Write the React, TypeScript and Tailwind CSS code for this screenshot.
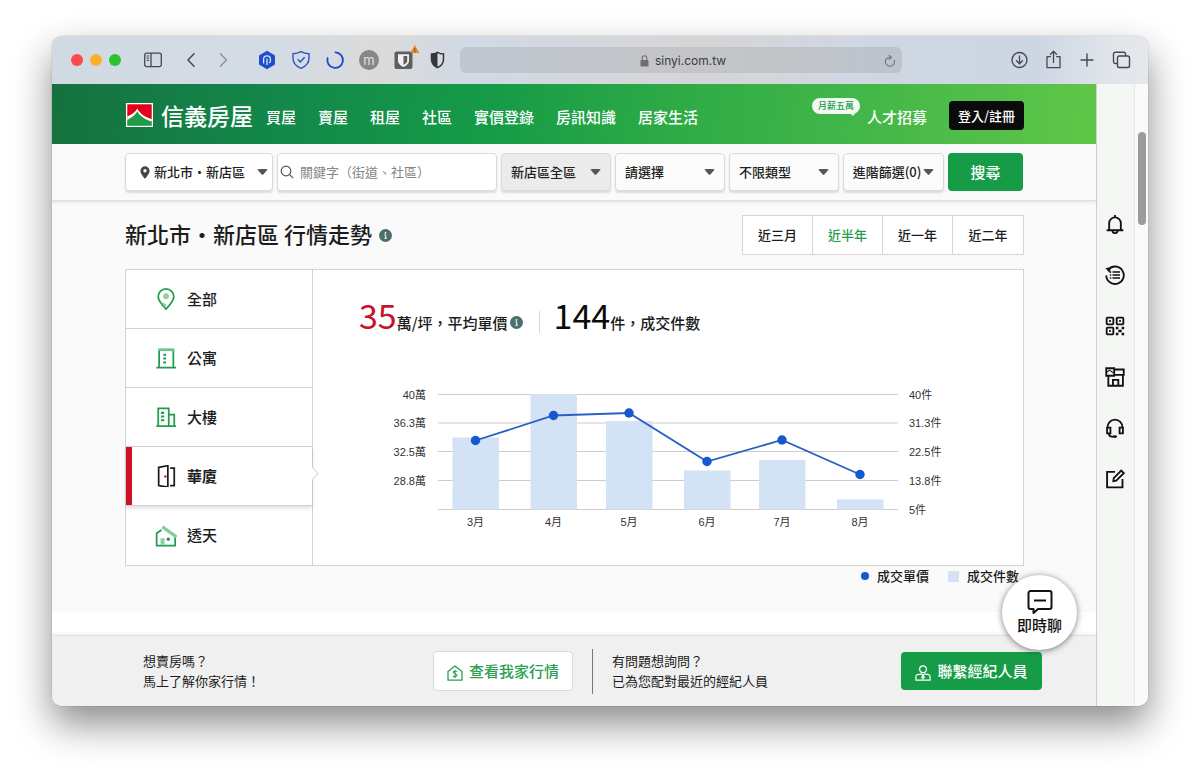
import type { ReactNode } from "react";

function Svg({
  size = 20,
  box = 24,
  width = 1.5,
  className = "",
  children,
}: {
  size?: number;
  box?: number;
  width?: number;
  className?: string;
  children: ReactNode;
}) {
  return (
    <svg
      width={size}
      height={size}
      viewBox={`0 0 ${box} ${box}`}
      fill="none"
      stroke="currentColor"
      strokeWidth={width}
      aria-hidden="true"
      className={`shrink-0 ${className}`}
    >
      {children}
    </svg>
  );
}

function Caret() {
  return (
    <svg width="11" height="6" viewBox="0 0 11 6" aria-hidden="true" className="pointer-events-none shrink-0 text-[#555555]">
      <path d="M0.3 0.4 C2 -0.1 9 -0.1 10.7 0.4 L6.3 5.4 Q5.5 6.2 4.7 5.4Z" fill="currentColor" />
    </svg>
  );
}

function InfoDot() {
  return (
    <svg width="13" height="13" viewBox="0 0 13 13" aria-hidden="true" className="shrink-0">
      <circle cx="6.5" cy="6.5" r="6.5" fill="#4a706c" />
      <circle cx="6.5" cy="3.9" r="0.9" fill="#ffffff" />
      <path d="M5.4 5.9h1.300v3.200M5.300 9.200h2.600" stroke="#ffffff" strokeWidth="1" fill="none" />
    </svg>
  );
}

function BrowserBar() {
  return (
    <div className="flex h-12 items-center bg-[linear-gradient(90deg,#d1d9e3_0%,#d3dbe5_18%,#dadbdb_30%,#d2d9e4_38%,#d5d5d6_60%,#d0d7e2_72%,#cdd6e3_90%,#e2e6eb_97%,#e4e7ec_100%)] pl-[19px] pr-[17px] text-[#45474c]">
      <div className="flex gap-[7px]">
        <span className="size-3 rounded-full bg-[#f94b4c]" />
        <span className="size-3 rounded-full bg-[#fdb12b]" />
        <span className="size-3 rounded-full bg-[#2bc131]" />
      </div>
      <button type="button" aria-label="側邊欄" className="ml-[23px]">
        <svg width="18" height="16" viewBox="0 0 18 16" fill="none" stroke="currentColor" strokeWidth="1.3" aria-hidden="true">
          <rect x="0.7" y="1.2" width="16.6" height="13.4" rx="1.8" />
          <path d="M7 1.2v13.4" />
          <path d="M2.5 4h2.7M2.5 6.2h2.7M2.5 8.4h2.7" strokeWidth="1" />
        </svg>
      </button>
      <button type="button" aria-label="上一頁" className="ml-[19px]">
        <Svg box={20}><path d="M13 3.8 7 10l6 6.2" strokeLinecap="round" strokeLinejoin="round" /></Svg>
      </button>
      <button type="button" aria-label="下一頁" className="ml-3 text-[#8f949c]">
        <Svg box={20}><path d="M7.5 3.8 13.5 10l-6 6.2" strokeLinecap="round" strokeLinejoin="round" /></Svg>
      </button>
      <div className="ml-6 flex gap-[14px]">
        <Svg box={20}>
          <path d="M10 1.6 17.2 5.8v8.4L10 18.400 2.800 14.200V5.800Z" fill="#1d4ecb" stroke="#1d4ecb" strokeLinejoin="round" />
          <path d="M6.600 13.400V9.200a3.400 3.400 0 0 1 6.800 0v1.900a1.600 1.600 0 0 1-1.600 1.600M10 8.500v6.500" stroke="#dbe6fb" strokeWidth="1.300" />
        </Svg>
        <Svg box={20}>
          <path d="M10 1.6c2.6 1.4 5.3 2 8 2.1v4.6c0 5-3.6 8.2-8 10.1-4.400-1.900-8-5.100-8-10.100V3.700c2.700-.1 5.400-.7 8-2.100Z" stroke="#2a55c9" strokeWidth="1.4" />
          <path d="m6.700 9.300 2.500 2.600 4.500-4.700" stroke="#2a55c9" strokeWidth="1.500" />
        </Svg>
        <Svg box={20}>
          <path d="M10.500 2.300A7.800 7.800 0 1 1 2.600 8" stroke="#1c45d6" strokeWidth="1.800" strokeLinecap="round" />
        </Svg>
        <span className="flex size-5 items-center justify-center rounded-full bg-[#878787] font-['Inter',sans-serif] text-[13px] leading-none text-[#e2e2e2]">m</span>
        <svg width="20" height="20" viewBox="0 0 20 20" aria-hidden="true" className="overflow-visible">
          <rect x="1.500" y="1.500" width="18" height="17.500" rx="2" fill="#5f5f60" />
          <path d="M5 4.200h11v6.300c0 3.200-2.800 5.200-5.500 6.600C7.800 15.700 5 13.700 5 10.500Z" fill="#f1f1f1" />
          <path d="M10.500 6h3.700v4.600c0 2-1.600 3.300-3.700 4.500Z" fill="#5f5f60" />
          <path d="M21.800-5 26.300 3H17.300Z" fill="#e9862b" />
          <path d="M21.800-2v2.800M21.800 1.400v1" stroke="#7c4a1a" strokeWidth="0.900" />
        </svg>
        <Svg box={20}>
          <path d="M10.500 2.300c2 1.300 4 1.700 6 1.700v5.200c0 4-2.600 6.800-6 8.500-3.400-1.700-6-4.500-6-8.500V4c2 0 4-.4 6-1.700Z" stroke="#33363c" strokeWidth="1.500" />
          <path d="M10.500 2.300v15.400c-3.400-1.700-6-4.500-6-8.500V4c2 0 4-.4 6-1.700Z" fill="#33363c" stroke="none" />
        </Svg>
      </div>
      <div className="ml-[13px] grid h-[26px] flex-1 grid-cols-[1fr_auto_1fr] items-center rounded-md bg-[linear-gradient(90deg,#bfc7d1,#c4c5c7_50%,#c2c4c8_75%,#bbc3ce)] pl-2.5 pr-1.5 pt-0.5">
        <span />
        <span className="flex items-center gap-1.5 font-['Inter',sans-serif] text-[12px] text-[#3b3c3f]">
          <svg width="9" height="12" viewBox="0 0 9 12" aria-hidden="true">
            <rect x="0.500" y="5" width="8" height="6.600" rx="1" fill="#6e6f72" />
            <path d="M2.200 5.200V3.100a2.300 2.300 0 0 1 4.600 0v2.100" fill="none" stroke="#6e6f72" strokeWidth="1.100" />
          </svg>
          sinyi.com.tw
        </span>
        <button type="button" aria-label="重新載入" className="justify-self-end text-[#6d7178]">
          <Svg size={12} box={12} width={1.1}>
            <path d="M10.200 5.400A4.500 4.500 0 1 1 6 2.300h1M5.200 0.400 7.300 2.300 5.200 4.400" strokeLinecap="round" />
          </Svg>
        </button>
      </div>
      <div className="ml-[107px] flex gap-[14px]">
        <button type="button" aria-label="下載項目">
          <Svg box={20} width={1.3}>
            <circle cx="10.500" cy="10" r="7.500" />
            <path d="M10.500 6v7.500M7.500 10.700l3 3 3-3" strokeLinecap="round" strokeLinejoin="round" />
          </Svg>
        </button>
        <button type="button" aria-label="分享">
          <Svg box={20} width={1.300}>
            <path d="M7.300 6.700H4v11h13v-11h-3.300M10.500 12.500V1.500M7.500 4.300l3-3 3 3" strokeLinecap="round" strokeLinejoin="round" />
          </Svg>
        </button>
        <button type="button" aria-label="新增分頁">
          <Svg box={20} width={1.400}><path d="M10 4v12M4 10h12" strokeLinecap="round" /></Svg>
        </button>
        <button type="button" aria-label="分頁總覽">
          <Svg box={20} width={1.400}>
            <rect x="6.500" y="6" width="12" height="11.500" rx="1.800" />
            <path d="M6.300 13.500H4.200a1.700 1.700 0 0 1-1.700-1.700V4a1.700 1.700 0 0 1 1.700-1.700h8.600A1.700 1.700 0 0 1 14.500 4v1.800" />
          </Svg>
        </button>
      </div>
    </div>
  );
}

const navItems = ["買屋", "賣屋", "租屋", "社區", "實價登錄", "房訊知識", "居家生活"];

function SiteHeader() {
  return (
    <header className="flex h-[60px] items-center bg-[linear-gradient(97deg,#15713f_0%,#13884a_22%,#159b47_42%,#2fab46_60%,#44b749_78%,#60c648_100%)] pl-[74px] pr-[72px] text-white">
      <a href="#home" className="flex items-center gap-2 pt-0.5">
        <svg width="27" height="24" viewBox="0 0 27 24" aria-hidden="true">
          <rect width="27" height="24" fill="#ffffff" />
          <rect x="1.300" y="1.300" width="24.400" height="21.400" fill="#e2001a" />
          <path d="M1.300 13.500C5.500 12 9.500 9 11.300 5.500C13.500 10 19 14.500 25.700 16V22.700H1.300Z" fill="#ffffff" />
          <path d="M1.300 17C6 14.500 9.500 11.500 11.300 8.500C14 13 19 16.500 25.700 18.500V22.700H1.300Z" fill="#1f9c48" />
        </svg>
        <span className="text-[23px] font-medium leading-none">信義房屋</span>
      </a>
      <nav className="ml-[13px] flex gap-[22px] pt-1 text-[15px] font-medium leading-none">
        {navItems.map((item) => (
          <a key={item} href="#nav" className="whitespace-nowrap">{item}</a>
        ))}
      </nav>
      <div className="ml-auto flex items-center">
        <a href="#jobs" className="relative pt-1 text-[15px] font-medium leading-none">
          人才招募
          <span className="absolute bottom-2.5 right-[67px] flex h-4 w-12 items-center justify-center rounded-full bg-[#f2faf3] text-[9px] font-medium leading-none text-[#1a9a49]">
            月薪五萬
            <svg width="9" height="6" viewBox="0 0 9 6" aria-hidden="true" className="absolute right-1 top-[13px]">
              <path d="M0 0.500 9 0 6.500 5Z" fill="#f2faf3" />
            </svg>
          </span>
        </a>
        <button type="button" className="ml-[22px] mt-[3px] h-[29px] w-[75px] rounded bg-[#0b0b0b] text-[13px] font-medium leading-none">
          登入/註冊
        </button>
      </div>
    </header>
  );
}

const boxClass =
  "h-[38px] rounded border border-[#d9dbdb] text-[13px] text-[#222222] shadow-[0_2px_2px_rgba(0,0,0,0.12)]";

function FilterSelect({ label, value, className }: { label: string; value: string; className: string }) {
  return (
    <label className="grid w-[110px] shrink-0 items-center">
      <select
        aria-label={label}
        defaultValue={value}
        className={`${boxClass} ${className} col-start-1 row-start-1 w-full appearance-none pl-[9px] pr-6 font-medium outline-none`}
      >
        <option>{value}</option>
      </select>
      <span className="pointer-events-none col-start-1 row-start-1 justify-self-end pr-2.5">
        <Caret />
      </span>
    </label>
  );
}

function SearchBar() {
  return (
    <form
      onSubmit={(event) => event.preventDefault()}
      className="relative flex h-[57px] items-center gap-1 border-b border-[#e0e0e0] bg-[#fafafa] px-[73px] shadow-[0_2px_3px_rgba(0,0,0,0.08)]"
    >
      <button type="button" className={`${boxClass} flex w-[148px] shrink-0 items-center whitespace-nowrap bg-white pl-[14px] pr-1 font-medium`}>
        <svg width="10" height="13" viewBox="0 0 10 13" aria-hidden="true" className="mr-1 shrink-0">
          <path d="M5 .3A4.600 4.600 0 0 0 .4 4.900C.4 8 5 12.700 5 12.700S9.600 8 9.600 4.900A4.600 4.600 0 0 0 5 .3Z" fill="#444444" />
          <circle cx="5" cy="4.700" r="1.700" fill="#ffffff" />
        </svg>
        新北市・新店區
        <span className="ml-auto"><Caret /></span>
      </button>
      <label className={`${boxClass} flex min-w-0 flex-1 items-center gap-1.5 bg-white pl-0.5`}>
        <Svg size={14} box={14} width={1.200} className="text-[#555555]">
          <circle cx="6" cy="6" r="4.800" />
          <path d="m9.600 9.600 3.600 3.600" />
        </Svg>
        <input
          type="text"
          aria-label="關鍵字"
          placeholder="關鍵字（街道、社區）"
          className="min-w-0 flex-1 bg-transparent outline-none placeholder:text-[#858585]"
        />
      </label>
      <FilterSelect label="區域" value="新店區全區" className="bg-[#ebebeb]" />
      <FilterSelect label="價格" value="請選擇" className="bg-[#fbfbfb]" />
      <FilterSelect label="類型" value="不限類型" className="bg-[#fbfbfb]" />
      <button type="button" className={`${boxClass} flex w-[101px] shrink-0 items-center justify-center gap-0.5 whitespace-nowrap bg-[#fbfbfb] font-medium`}>
        進階篩選(0)
        <Caret />
      </button>
      <button type="submit" className="h-[38px] w-[75px] shrink-0 rounded bg-[#169c46] text-[15px] font-medium text-white">
        搜尋
      </button>
    </form>
  );
}

const periods = ["近三月", "近半年", "近一年", "近二年"];

function PeriodTabs() {
  return (
    <div className="flex h-10 divide-x divide-[#d5d5d5] border border-[#d5d5d5] bg-white text-[13px] font-medium">
      {periods.map((p) => (
        <button key={p} type="button" className={`w-[70px] ${p === "近半年" ? "text-[#1f9d4b]" : "text-[#1c1c1c]"}`}>
          {p}
        </button>
      ))}
    </div>
  );
}

const kinds: { name: string; icon: ReactNode }[] = [
  {
    name: "全部",
    icon: (
      <>
        <path d="M12 23C8 18.500 3.500 14 3.500 9.500a8.500 8.500 0 0 1 17 0C20.500 14 16 18.500 12 23Z" />
        <path d="m6 15 6 7.500v-5Z" fill="#8fd0a5" stroke="none" />
        <circle cx="12" cy="9" r="3.200" fill="#8fd0a5" stroke="none" />
      </>
    ),
  },
  {
    name: "公寓",
    icon: (
      <>
        <path d="M4.500 3.500v19M20 3.500v19M1.500 22.500h21.500" />
        <path d="M3.500 3h17.500" stroke="#6fc08b" strokeWidth="3" />
        <path d="M9 8.500h3M9 12.500h3M9 17h3" strokeWidth="2.200" />
      </>
    ),
  },
  {
    name: "大樓",
    icon: (
      <>
        <path d="M3.500 22V2.500h11.500V22M15 9.500h6V22M1.500 22h21.500" />
        <path d="M6.500 7.500h3.500M6.500 11.500h3.500M6.500 15.500h3.500" strokeWidth="2.200" />
      </>
    ),
  },
  {
    name: "華廈",
    icon: (
      <>
        <path d="M4 2.500 14 .8v23.400L4 22.500ZM16.500 3.500h4.500v19h-4.500" />
        <circle cx="11.300" cy="12.500" r="1.300" fill="#d01c2a" stroke="none" />
      </>
    ),
  },
  {
    name: "透天",
    icon: (
      <>
        <path d="M7 5.500 1.800 9v13.500h20.200V13" />
        <path d="m8 2 15.500 11" stroke="#86cb9d" strokeWidth="3.500" />
        <path d="M6 14.500h4.500v7h-4.500Z" fill="#8fd0a5" stroke="none" />
        <circle cx="14.500" cy="15.500" r="1.800" fill="#1c8f46" stroke="none" />
      </>
    ),
  },
];

function KindList() {
  return (
    <div className="flex w-[187px] shrink-0 flex-col border-r border-[#d2d4d4]">
      {kinds.map(({ name, icon }, i) => {
        const active = name === "華廈";
        return (
          <button
            key={name}
            type="button"
            className={`relative flex h-[59px] items-center gap-[10px] pl-[29px] text-left text-[15px] text-[#1c1c1c] ${
              i < kinds.length - 1 ? "border-b border-[#d2d4d4]" : ""
            } ${active ? "font-bold shadow-[0_2px_4px_rgba(0,0,0,0.14)]" : "font-medium"}`}
          >
            {active && (
              <>
                <span className="absolute inset-y-0 left-0 w-1.5 bg-[#ce1126]" />
                <span className="absolute right-[-5px] top-[22px] size-[9px] rotate-45 border-r border-t border-[#d2d4d4] bg-white" />
              </>
            )}
            <Svg size={22} width={1.900} className={active ? "text-[#1c1c1c]" : "text-[#1f9d4b]"}>{icon}</Svg>
            {name}
          </button>
        );
      })}
    </div>
  );
}

const months = [
  { label: "3月", x: 162.5, price: 70.5, count: 67.5 },
  { label: "4月", x: 240.5, price: 45.5, count: 24 },
  { label: "5月", x: 316, price: 43, count: 51 },
  { label: "6月", x: 394, price: 91.5, count: 100.5 },
  { label: "7月", x: 469, price: 70, count: 90 },
  { label: "8月", x: 547, price: 104.5, count: 129.5 },
];

const gridLines = [
  { y: 24.5, left: "40萬", right: "40件" },
  { y: 53, left: "36.3萬", right: "31.3件" },
  { y: 81.5, left: "32.5萬", right: "22.5件" },
  { y: 110.5, left: "28.8萬", right: "13.8件" },
  { y: 139.5, left: "", right: "5件" },
];

function TrendChart() {
  return (
    <svg
      viewBox="0 0 710 195"
      role="img"
      aria-label="成交單價與成交件數"
      className="mt-auto w-full font-['Liberation_Sans','Noto_Sans_CJK_TC',sans-serif] text-[11px]"
      fill="#333333"
    >
      {gridLines.map((g) => (
        <g key={g.y}>
          <path d={`M125 ${g.y}H585`} stroke="#cccccc" />
          <text x="113" y={g.y + 4} textAnchor="end">{g.left}</text>
          <text x="596" y={g.y + 4}>{g.right}</text>
        </g>
      ))}
      {months.map((m) => (
        <g key={m.label}>
          <rect x={m.x - 23} y={m.count} width="46.500" height={139.500 - m.count} fill="#d3e2f4" />
          <text x={m.x} y="156" textAnchor="middle">{m.label}</text>
        </g>
      ))}
      <polyline points={months.map((m) => `${m.x},${m.price}`).join(" ")} fill="none" stroke="#2a5fc4" strokeWidth="1.800" />
      {months.map((m) => (
        <circle key={m.label} cx={m.x} cy={m.price} r="4.700" fill="#1558d0" />
      ))}
    </svg>
  );
}

function MarketPanel() {
  return (
    <section className="bg-[#fafafa] pb-[26px] pl-[73px] pr-[72px] pt-[14px]">
      <div className="flex items-center justify-between">
        <h1 className="flex items-center gap-[7px] text-[22px] font-medium leading-none text-[#1c1c1c]">
          <span className="pb-1">新北市・新店區 行情走勢</span>
          <InfoDot />
        </h1>
        <PeriodTabs />
      </div>
      <div className="mt-[14px] flex border border-[#d2d4d4] bg-white">
        <KindList />
        <div className="flex min-w-0 flex-1 flex-col">
          <div className="flex items-end pl-[46px] pt-7 text-[15px] font-medium text-[#1c1c1c]">
            <p className="flex items-baseline leading-[34px]">
              <strong className="text-[34px] font-normal text-[#c8142b]">35</strong>
              萬/坪，平均單價
            </p>
            <span className="mb-[11px] ml-0.5"><InfoDot /></span>
            <span className="mb-[7px] ml-4 mr-[14px] h-[22px] w-px bg-[#d8d8d8]" />
            <p className="flex items-baseline leading-[34px]">
              <strong className="text-[34px] font-normal text-[#0b0b0b]">144</strong>
              件，成交件數
            </p>
          </div>
          <TrendChart />
        </div>
      </div>
      <div className="flex h-5 items-center justify-end pr-[5px] text-[13px] font-medium text-[#1c1c1c]">
        <span className="mr-2 size-2 rounded-full bg-[#1558d0]" />
        成交單價
        <span className="ml-[19px] mr-2 size-[11px] bg-[#d3e2f4]" />
        成交件數
      </div>
    </section>
  );
}

function ActionBar() {
  return (
    <div className="flex h-[71px] items-center border-t border-[#e4e4e4] bg-[#f0f0f0] pl-[91px] pr-[54px] text-[13px] leading-5 text-[#1c1c1c] shadow-[0_-1px_3px_rgba(0,0,0,0.08)]">
      <div className="flex flex-1 items-center justify-between">
        <p>想賣房嗎？<br />馬上了解你家行情！</p>
        <button type="button" className="flex h-10 w-[140px] items-center justify-center gap-1.5 rounded border border-[#d9d9d9] bg-white text-[15px] font-medium text-[#2aa052]">
          <Svg size={16} box={16} width={1.300} className="mt-1">
            <path d="M1 6.500 8 .9l7 5.600V15.200H1Z" strokeLinejoin="round" />
            <path d="M10 6.600C9.300 5.800 6.300 5.800 6.300 7.300S10 8.600 10 10.300 6.700 12 6 10.900M8.100 5v8" strokeWidth="1.100" />
          </Svg>
          查看我家行情
        </button>
      </div>
      <span className="mx-[19px] h-[45px] w-px bg-[#777777]" />
      <div className="flex flex-1 items-center justify-between">
        <p>有問題想詢問？<br />已為您配對最近的經紀人員</p>
        <button type="button" className="flex h-[38px] w-[141px] items-center justify-center gap-1.5 rounded bg-[#169c46] text-[15px] font-medium text-white">
          <Svg size={16} box={16} width={1.200} className="mt-1">
            <circle cx="8" cy="4.300" r="3.400" />
            <path d="M5.600 9.300H3.500A2.600 2.600 0 0 0 .9 12v3.200h14.200V12a2.600 2.600 0 0 0-2.600-2.700h-2.100M5.600 8.500 8 10.300l2.400-1.800M8 10.300 6.700 12.200 8 13.600l1.300-1.400Z" />
          </Svg>
          聯繫經紀人員
        </button>
      </div>
    </div>
  );
}

const railItems: { label: string; icon: ReactNode }[] = [
  {
    label: "通知",
    icon: (
      <>
        <path d="M2 19.500h20M5 19.500V11a7 7 0 0 1 14 0v8.500M12 1.300V4" />
        <path d="M9 20.500a3 2.500 0 0 0 6 0" />
      </>
    ),
  },
  {
    label: "瀏覽紀錄",
    icon: (
      <>
        <path d="M4 5.500A10.500 10.500 0 1 1 1.500 12.500" />
        <path d="M.5 3.500 7 3 5.500 9.500Z" fill="currentColor" stroke="none" />
        <path d="M9 8.500h9M9 12h9M9 15.500h9M5.800 8.500h1.700M5.800 12h1.700M5.800 15.500h1.700" strokeWidth="1.800" />
      </>
    ),
  },
  {
    label: "行動條碼",
    icon: (
      <>
        <rect x="2" y="2" width="8" height="8" rx="1" />
        <rect x="14" y="2" width="8" height="8" rx="1" />
        <rect x="2" y="14" width="8" height="8" rx="1" />
        <path d="M5 6h2M17 6h2M5 18h2" />
        <path d="M13 14.500h3M20 14.500h3M16 18h4M13 21.700h3M20 21.700h3M18 16.500v3" strokeWidth="3" />
      </>
    ),
  },
  {
    label: "分店",
    icon: (
      <>
        <path d="M1.500 1.500h9.500v9H1.500ZM11 3h11.500v6.500H11M4 10.500v12h17.500V10M9.500 22.500v-7h6.500v7" />
        <path d="m2.500 6 3-2.200L10 7" strokeWidth="1.300" />
      </>
    ),
  },
  {
    label: "客服",
    icon: (
      <>
        <path d="M3 11.500a9 9.500 0 0 1 18 0M2.500 11.500h4v7h-4ZM17.500 11.500h4v7h-4ZM4.500 18.500c0 2.500 2.500 4 6 4" />
        <ellipse cx="12" cy="22.300" rx="2.500" ry="1.600" fill="currentColor" stroke="none" />
      </>
    ),
  },
  {
    label: "意見回饋",
    icon: (
      <>
        <path d="M12 3.500H2.500v18.500H21V12" />
        <path d="m10 14.500.500-3.500L19.500 2l3 3-9 9Z" />
      </>
    ),
  },
];

function SideRail() {
  return (
    <aside className="flex w-[38px] shrink-0 flex-col items-center gap-[31px] border-l border-[#d0d2d0] bg-[#f5f7f5] pr-0.5 pt-[130px] text-[#111111]">
      {railItems.map(({ label, icon }) => (
        <button key={label} type="button" aria-label={label} className="size-5">
          <Svg width={2.200}>{icon}</Svg>
        </button>
      ))}
    </aside>
  );
}

export default function App() {
  return (
    <div className="min-h-screen bg-white px-[52px] pb-[69px] pt-9 font-['Noto_Sans_CJK_TC',sans-serif]">
      <div className="overflow-hidden rounded-[10px] shadow-[0_0_1px_rgba(0,0,0,0.5),0_18px_38px_rgba(0,0,0,0.46)]">
        <BrowserBar />
        <div className="flex">
          <main className="relative min-w-0 flex-1 bg-white">
            <SiteHeader />
            <SearchBar />
            <MarketPanel />
            <div className="h-[23px]" />
            <ActionBar />
            <button
              type="button"
              className="absolute bottom-14 right-[19px] flex size-[75px] flex-col items-center justify-center gap-0.5 rounded-full bg-white pb-1 text-[15px] font-medium leading-none text-[#111111] shadow-[0_1px_6px_rgba(0,0,0,0.5)]"
            >
              <Svg size={26} box={26} width={2}>
                <path d="M3.500 2h19a2 2 0 0 1 2 2v14a2 2 0 0 1-2 2H11L6.500 24v-4h-3a2 2 0 0 1-2-2V4a2 2 0 0 1 2-2Z" strokeLinejoin="round" />
                <path d="M7 11.500h12" />
              </Svg>
              即時聊
            </button>
          </main>
          <SideRail />
          <div className="flex w-[14px] shrink-0 justify-center border-l border-[#e6e8e6] bg-[#fafafa] pt-12">
            <span className="h-[93px] w-2 rounded-full bg-[#9c9c9c]" />
          </div>
        </div>
      </div>
    </div>
  );
}
